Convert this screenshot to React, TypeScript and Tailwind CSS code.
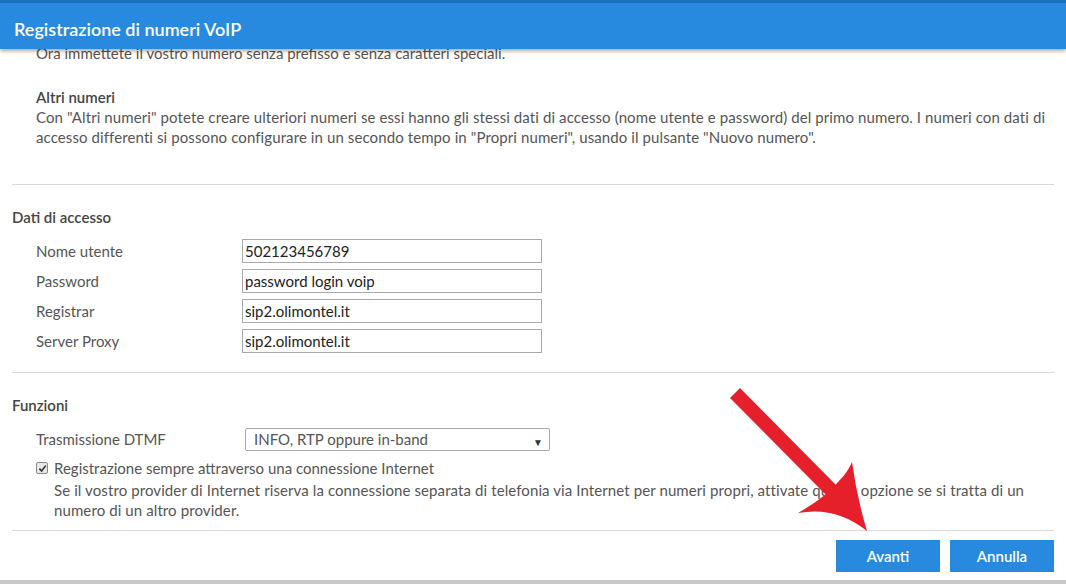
import React from 'react';

const font = { fontFamily: '"Source Sans Pro", Lato, "Liberation Sans", sans-serif' };

const Field: React.FC<{ label: string; value: string }> = ({ label, value }) => (
  <div className="flex items-center h-[30px]">
    <span className="w-[230px] shrink-0 pl-[24px]">{label}</span>
    <input
      readOnly
      value={value}
      className="w-[300px] h-[24px] border border-[#a9a9a9] bg-white px-[2px] text-[15px] text-[#222] outline-none"
      style={font}
    />
  </div>
);

const RedArrow = () => (
  <svg className="absolute left-0 top-0 pointer-events-none" width="1066" height="584" viewBox="0 0 1066 584">
    <line x1="735" y1="393" x2="838" y2="497" stroke="#e5202b" strokeWidth="14" strokeLinecap="butt" />
    <path
      d="M867 531 Q836 506 798 513 Q826 497 838 482 Q848 472 852 462 Q857 498 867 531 Z"
      fill="#e5202b"
    />
  </svg>
);

export default function App() {
  return (
    <div className="relative w-[1066px] h-[584px] overflow-hidden bg-white text-[15px] text-[#555]" style={font}>
      <div className="relative z-10 border-t-[3px] border-[#1b6fbd] bg-[#278ade] h-[49px] shadow-[0_2px_4px_rgba(0,0,0,0.35)] flex items-center px-[14px]">
        <h1 className="text-[18px] font-semibold text-white mt-[7px]">Registrazione di numeri VoIP</h1>
      </div>

      <div className="-mt-[6px] leading-[20px]">
        <div className="px-[36px]">
          <p>Ora immettete il vostro numero senza prefisso e senza caratteri speciali.</p>
          <p className="mt-[24px] font-semibold text-[#444]">Altri numeri</p>
          <p className="whitespace-nowrap tracking-[0.1px]">
            Con "Altri numeri" potete creare ulteriori numeri se essi hanno gli stessi dati di accesso (nome utente e password) del primo numero. I numeri con dati di
            <br />
            accesso differenti si possono configurare in un secondo tempo in "Propri numeri", usando il pulsante "Nuovo numero".
          </p>
        </div>

        <hr className="mx-[12px] mt-[37px] border-t border-[#d9d9d9]" />

        <div className="px-[12px]">
          <p className="mt-[22px] font-semibold text-[#444]">Dati di accesso</p>
          <div className="mt-[9px]">
            <Field label="Nome utente" value="502123456789" />
            <Field label="Password" value="password login voip" />
            <Field label="Registrar" value="sip2.olimontel.it" />
            <Field label="Server Proxy" value="sip2.olimontel.it" />
          </div>
        </div>

        <hr className="mx-[12px] mt-[16px] border-t border-[#d9d9d9]" />

        <div className="px-[12px]">
          <p className="mt-[22px] font-semibold text-[#444]">Funzioni</p>
          <div className="mt-[9px] flex items-center h-[30px]">
            <span className="w-[233px] shrink-0 pl-[24px]">Trasmissione DTMF</span>
            <div className="relative w-[305px] h-[23px] border border-[#a9a9a9] rounded-[2px] bg-white flex items-center px-[8px] text-[#555]">
              <span>INFO, RTP oppure in-band</span>
              <span className="absolute right-[6px] top-[3px] text-[10px] text-[#333]">▼</span>
            </div>
          </div>
          <div className="flex items-center mt-[4px] pl-[24px]">
            <span className="w-[12px] h-[12px] rounded-[2px] border border-[#888] bg-[#e8e8e8] flex items-center justify-center mr-[6px]">
              <svg width="9" height="9" viewBox="0 0 10 10">
                <path d="M1.5 5.2 L4 7.8 L8.6 1.8" stroke="#333" strokeWidth="1.8" fill="none" />
              </svg>
            </span>
            <span>Registrazione sempre attraverso una connessione Internet</span>
          </div>
          <p className="pl-[42px] mt-[2px] whitespace-nowrap tracking-[0.1px]">
            Se il vostro provider di Internet riserva la connessione separata di telefonia via Internet per numeri propri, attivate questa opzione se si tratta di un
            <br />
            numero di un altro provider.
          </p>
        </div>

        <hr className="mx-[12px] mt-[10px] border-t border-[#d9d9d9]" />

        <div className="flex justify-end gap-[10px] pr-[12px] mt-[9px]">
          <button className="w-[104px] h-[32px] bg-[#278ade] text-white font-semibold">Avanti</button>
          <button className="w-[104px] h-[32px] bg-[#278ade] text-white font-semibold">Annulla</button>
        </div>
      </div>

      <div className="absolute left-0 right-0 bottom-0 h-[4px] bg-[#c8c8c8]" />
      <RedArrow />
    </div>
  );
}
